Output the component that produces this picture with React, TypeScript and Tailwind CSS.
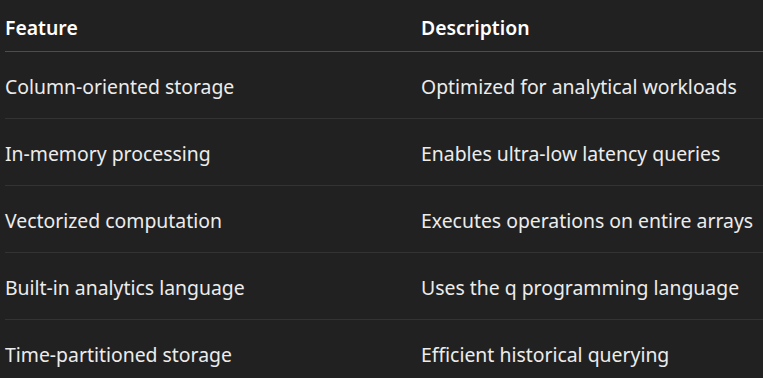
import React from 'react';

const rows: [string, string][] = [
    ['Column-oriented storage', 'Optimized for analytical workloads'],
    ['In-memory processing', 'Enables ultra-low latency queries'],
    ['Vectorized computation', 'Executes operations on entire arrays'],
    ['Built-in analytics language', 'Uses the q programming language'],
    ['Time-partitioned storage', 'Efficient historical querying'],
];

const App: React.FC = () => (
    <div
        className="w-[763px] h-[378px] overflow-hidden bg-[#212121] pl-[5px] text-[#ececec]"
        style={{ fontFamily: '"Noto Sans", "Open Sans", sans-serif' }}
    >
        <div className="flex h-[52px] items-center border-b border-[#4d4d4d] pt-[4px] text-[19.4px] font-semibold text-white">
            <div className="w-[416px]">Feature</div>
            <div>Description</div>
        </div>
        {rows.map(([feature, description]) => (
            <div
                key={feature}
                className="flex h-[67px] items-center border-b border-[#333333] pt-[4px] text-[19.4px]"
            >
                <div className="w-[416px]">{feature}</div>
                <div className="whitespace-nowrap">{description}</div>
            </div>
        ))}
    </div>
);

export default App;
